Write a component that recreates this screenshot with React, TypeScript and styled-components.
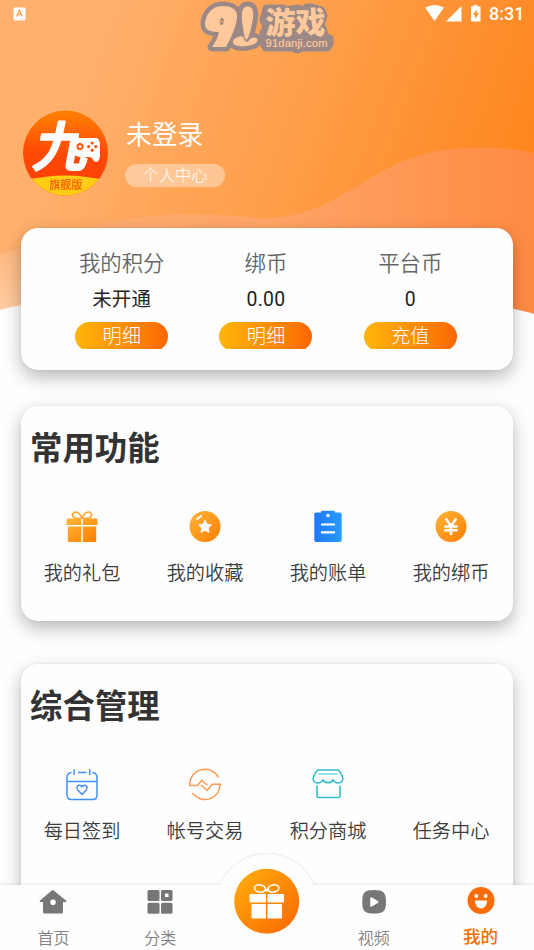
import React from "react";
import styled, { createGlobalStyle } from "styled-components";

const GlobalStyle = createGlobalStyle`
  * { box-sizing: border-box; }
  html, body { margin: 0; padding: 0; }
  body { background: #fefefe; font-family: "Noto Sans CJK SC", "Noto Sans", sans-serif; }
`;

const Screen = styled.div`
  position: relative;
  width: 534px;
  height: 950px;
  overflow: hidden;
  background: #fefefe;
  display: flex;
  flex-direction: column;
`;

const Backdrop = styled.svg`
  position: absolute;
  left: 0;
  top: 0;
`;

const StatusBar = styled.header`
  position: relative;
  flex: none;
  height: 28px;
  padding: 0 9px 0 13px;
  display: flex;
  align-items: center;
  justify-content: space-between;
`;

const StatusIcons = styled.div`
  display: flex;
  align-items: center;
`;

const Clock = styled.span`
  width: 36px;
  margin-left: 8px;
  font: 500 18px/28px Roboto, sans-serif;
  color: #fff;
  white-space: nowrap;
`;

const Watermark = styled.svg`
  position: absolute;
  left: 198px;
  top: 0;
`;

const Profile = styled.section`
  position: relative;
  flex: none;
  display: flex;
  gap: 17px;
  margin-top: 82px;
  padding-left: 23px;
  height: 118px;
`;

const Avatar = styled.svg`
  flex: none;
`;

const ProfileText = styled.div`
  display: flex;
  flex-direction: column;
  align-items: flex-start;
`;

const UserName = styled.div`
  margin: 5px 0 14px 1px;
  font-size: 25.8px;
  line-height: 35px;
  color: #fff;
`;

const CenterPill = styled.button`
  width: 100px;
  height: 23px;
  padding: 0 0 3px;
  border: 0;
  border-radius: 12px;
  background: rgba(255, 255, 255, 0.38);
  color: #fff;
  font: 300 16.3px/20px "Noto Sans CJK SC", sans-serif;
`;

const Card = styled.section<{ $height: number; $gap: number }>`
  position: relative;
  flex: none;
  width: 492px;
  height: ${(p) => p.$height}px;
  margin: 0 21px ${(p) => p.$gap}px;
  border-radius: 17px;
  background: #fefefe;
  box-shadow: 0 7px 18px rgba(0, 0, 0, 0.28), 0 0 2px rgba(0, 0, 0, 0.08);
`;

const Balances = styled.div`
  display: grid;
  grid-template-columns: repeat(3, 144.3px);
  justify-content: center;
  padding: 17px 2px 0 0;
`;

const Balance = styled.div`
  display: flex;
  flex-direction: column;
  align-items: center;
`;

const BalanceLabel = styled.div`
  font-size: 21.4px;
  line-height: 33px;
  font-weight: 350;
  color: #666;
`;

const BalanceValue = styled.div`
  margin: 5px 0 7px;
  font-family: Roboto, "Noto Sans CJK SC", sans-serif;
  font-size: 19.4px;
  line-height: 32px;
  letter-spacing: 0.3px;
  padding-top: 1px;
  height: 32px;
  color: #222;
`;

const ActionClip = styled.div`
  height: 27px;
  overflow: hidden;
`;

const Action = styled.button`
  display: block;
  width: 93px;
  height: 29px;
  padding: 0 0 2px;
  border: 0;
  border-radius: 15px;
  background: linear-gradient(90deg, #ffb60b, #ff9009 50%, #fa6800);
  color: #fff;
  font: 300 19.3px/27px "Noto Sans CJK SC", sans-serif;
`;

const Heading = styled.h2`
  margin: 0;
  padding: 16px 0 0 9px;
  font-size: 32.4px;
  line-height: 48px;
  font-weight: 700;
  color: #333;
`;

const Features = styled.div`
  display: grid;
  grid-template-columns: repeat(4, 1fr);
  margin: 40px 0.5px 0 -0.5px;
`;

const Feature = styled.div`
  display: flex;
  flex-direction: column;
  align-items: center;
  gap: 12px;
  font-size: 19.2px;
  line-height: 32px;
  font-weight: 350;
  color: #3c3c3c;
`;

const FeatureIcon = styled.svg`
  width: 34px;
  height: 34px;
  overflow: visible;
`;

const NavBar = styled.nav`
  position: absolute;
  left: 0;
  right: 0;
  bottom: 0;
  height: 65px;
  display: grid;
  grid-template-columns: repeat(5, 1fr);
  background: #fefefe;
  box-shadow: 0 -1px 3px rgba(0, 0, 0, 0.09);
`;

const NavItem = styled.div<{ $active?: boolean }>`
  display: flex;
  flex-direction: column;
  align-items: center;
  padding-top: 2px;
  font-size: ${(p) => (p.$active ? 17.6 : 16)}px;
  font-weight: ${(p) => (p.$active ? 500 : 350)};
  line-height: 24px;
  color: ${(p) => (p.$active ? "#fa6c05" : "#808080")};
`;

const NavIcon = styled.svg`
  flex: none;
  width: 30px;
  height: 30px;
  margin-bottom: 8px;
`;

const ActiveNavLabel = styled.span`
  margin-top: -1px;
`;

const GiftTab = styled.svg`
  position: absolute;
  left: 214px;
  top: -35px;
`;

function Background() {
  return (
    <Backdrop width="534" height="330" viewBox="0 0 534 330">
      <defs>
        <linearGradient id="sky" gradientUnits="userSpaceOnUse" x1="85" y1="50" x2="510" y2="205">
          <stop offset="0" stopColor="#ffb06d" />
          <stop offset="0.5" stopColor="#ff9e49" />
          <stop offset="1" stopColor="#ff861e" />
        </linearGradient>
        <linearGradient id="wave" gradientUnits="userSpaceOnUse" x1="90" y1="230" x2="534" y2="230">
          <stop offset="0" stopColor="#ffae72" />
          <stop offset="0.45" stopColor="#ffa365" />
          <stop offset="1" stopColor="#ff8b43" />
        </linearGradient>
        <linearGradient id="pale" x1="0" y1="0" x2="0" y2="1">
          <stop offset="0" stopColor="#ffb77d" />
          <stop offset="1" stopColor="#ffcda2" />
        </linearGradient>
      </defs>
      <path d="M0 0H534V290H0Z" fill="url(#sky)" />
      <path d="M85 229C145 210 205 213 264 218C350 218 370 149 470 148C500 147 520 149 534 153V314Q500 303 430 300L85 300Z" fill="url(#wave)" />
      <path d="M0 254Q30 244 60 244V300Q24 303 0 310Z" fill="url(#pale)" />
    </Backdrop>
  );
}

const NINE =
  "M24 6C14 6 7 15 7 24C7 30 12 32 21 32C20 36 18 42 14 47H28C33 38 39 25 39 16C39 9 33 6 24 6ZM24 18C27 18 26 25 23.500 25C21 25 21 18 24 18Z";
const PIN = "M50 6C44 5 42 14 44 24C45 31 46 40 48 40C51 40 53 31 55 21C57 12 55 6 50 6Z";
const DISC = "M45 36.500C41 36 35 38 35 42C35 46 42 47 49 46C57 45 61 41 59 39C57 36.500 53 37 50 41.500Q47 43 45 36.500Z";

function WatermarkLogo() {
  return (
    <Watermark width="146" height="58" viewBox="0 0 146 58">
      <g fill="#9c8985" stroke="#9c8985" strokeWidth="9" strokeLinejoin="round">
        <path d={NINE} />
        <path d={PIN} />
        <path d={DISC} />
        <path d="M69 9H85L88 11L100 9L104 11L109 8H114L123 11L125 16L122 24L125 31L126 37L131 39V44L129 47H104L99 49L95 47H68L66 43V33L69 27L66 20Z" />
      </g>
      <g fill="#ffc99b">
        <path d={NINE} fillRule="evenodd" />
        <path d={PIN} stroke="#9c8985" strokeWidth="1" />
        <path d={DISC} />
        <text x="67.500" y="32.500" fontFamily="Noto Sans CJK SC" fontSize="30" fontWeight="900">游戏</text>
        <text x="67.500" y="46.500" fontFamily="Liberation Sans" fontSize="11.200" textLength="62" stroke="#ffc99b" strokeWidth="0.200">91danji.com</text>
      </g>
    </Watermark>
  );
}

function AvatarLogo() {
  return (
    <Avatar width="85" height="86" viewBox="0 0 85 86">
      <defs>
        <linearGradient id="av" x1="0" y1="0" x2="0" y2="1">
          <stop offset="0" stopColor="#ff8200" />
          <stop offset="0.5" stopColor="#ff4a06" />
          <stop offset="1" stopColor="#ff3b08" />
        </linearGradient>
        <clipPath id="avc"><circle cx="42.5" cy="43" r="42.5" /></clipPath>
      </defs>
      <g clipPath="url(#avc)">
        <rect width="85" height="86" fill="url(#av)" />
        <path d="M0 71Q42 60 85 71V86H0Z" fill="#ffcd14" />
      </g>
      <text transform="translate(9 56) skewX(-11) scale(0.98 0.97)" fontFamily="Noto Sans CJK SC" fontWeight="500" fontSize="55" fill="#fff" stroke="#fff" strokeWidth="2.600" strokeLinejoin="round">九</text>
      <path d="M52 28H74Q77 30 77 35V46Q76 52 73 52C70 52 70 47 66 47H58Q51 47 51 42V32Q50 30 52 28Z" fill="#fff" />
      <circle cx="57" cy="36.5" r="2.5" fill="none" stroke="#ff5208" strokeWidth="2" />
      <g fill="#ff5208">
        <circle cx="69.2" cy="33" r="1.6" />
        <circle cx="69.2" cy="40.2" r="1.6" />
        <circle cx="65.6" cy="36.6" r="1.6" />
        <circle cx="72.800" cy="36.6" r="1.6" />
      </g>
      <text x="42.8" y="79" textAnchor="middle" fontFamily="Noto Sans CJK SC" fontSize="11" fontWeight="500" fill="#f45a08">旗舰版</text>
    </Avatar>
  );
}

function IconGradients() {
  return (
    <Backdrop width="0" height="0">
      <defs>
        <linearGradient id="or" x1="0" y1="0" x2="1" y2="1">
          <stop offset="0" stopColor="#ffb53c" />
          <stop offset="1" stopColor="#ff7e00" />
        </linearGradient>
        <linearGradient id="bl" x1="0" y1="0" x2="1" y2="0">
          <stop offset="0" stopColor="#1f78ff" />
          <stop offset="1" stopColor="#279cff" />
        </linearGradient>
      </defs>
    </Backdrop>
  );
}

const Gift = () => (
  <FeatureIcon viewBox="0 0 34 34">
    <g fill="none" stroke="#ffa42c" strokeWidth="1.5">
      <path d="M17 8C14 1 9 1 7.5 4C6.500 8 12 9 17 8Z" />
      <path d="M17 8C20 1 25 1 26.500 4C27.500 8 22 9 17 8Z" />
    </g>
    <path d="M3 8.500H16.200V15H1.500V10Q1.500 8.500 3 8.500ZM17.800 8.500H31Q32.500 8.500 32.500 10V15H17.800ZM2.800 16.500H16.200V32H4Q2.800 32 2.800 31ZM17.800 16.500H31.200V31Q31.200 32 30 32H17.800Z" fill="url(#or)" />
  </FeatureIcon>
);

const Favorite = () => (
  <FeatureIcon viewBox="0 0 34 34">
    <circle cx="17" cy="16.500" r="15.500" fill="url(#or)" />
    <path d="M17 10.300L19 14.300L23.300 15L20.200 18L21 22.300L17 20.300L13 22.300L13.800 18L10.700 15L15 14.300Z" fill="#fff" stroke="#fff" strokeWidth="1" strokeLinejoin="round" />
    <path d="M9 9.300L13 6" stroke="#fff" strokeWidth="2" strokeLinecap="round" />
  </FeatureIcon>
);

const Bill = () => (
  <FeatureIcon viewBox="0 0 34 34">
    <path d="M5 2.500H10V2Q10 0.800 11.500 0.800H22.500Q24 0.800 24 2V2.500H29Q30.700 2.500 30.700 4.500V30Q30.700 32 29 32H5Q3.300 32 3.300 30V4.500Q3.300 2.500 5 2.500Z" fill="url(#bl)" />
    <circle cx="17" cy="5.500" r="1.800" fill="#fff" />
    <path d="M10 14.500H24M10 22.300H24" stroke="#fff" strokeWidth="2.200" />
  </FeatureIcon>
);

const Coin = () => (
  <FeatureIcon viewBox="0 0 34 34">
    <circle cx="17" cy="16.500" r="15.500" fill="url(#or)" />
    <path d="M12.300 9.300L17 16L21.700 9.300M17 16V24M11.300 16.500H22.700M11.300 20.200H22.700" fill="none" stroke="#fff" strokeWidth="2.500" strokeLinecap="round" strokeLinejoin="round" />
  </FeatureIcon>
);

const Calendar = () => (
  <FeatureIcon viewBox="0 0 34 34" fill="none" stroke="#438ff8" strokeWidth="1.500">
    <path d="M6.500 4.500Q2 5 2 9.500V27Q2 31.500 6.500 31.500H27.500Q32 31.500 32 27V9.500Q32 5 27.500 4.500M13 4.500H21.500M9 1.300V7M24.700 1.300V7M2 13.500H32" />
    <path d="M17 26.500L13 22.300C10.500 19.500 12.500 16.900 14.700 17.200Q16 17.400 17 18.800Q18 17.400 19.300 17.200C21.500 16.900 23.500 19.500 21 22.300Z" />
  </FeatureIcon>
);

const Trade = () => (
  <FeatureIcon viewBox="0 0 34 34" fill="none" stroke="#ff9a53" strokeWidth="1.500">
    <path d="M30.600 9.700A15.200 15.200 0 0 0 1.800 17.400H9.500L13.700 12.300L19.500 17.300" />
    <path d="M4.500 25A15.200 15.200 0 0 0 32.200 16.300H24.300L19.200 22.400L13 17" />
  </FeatureIcon>
);

const Shop = () => (
  <FeatureIcon viewBox="0 0 34 34" fill="none" stroke="#35bdca" strokeWidth="1.600">
    <path d="M7 2H27L29 4L31.700 9.500C32.500 13 30 15 27.500 15Q23.500 15 22 12Q20.500 14.700 17 14.700Q13.500 14.700 12 12Q10.500 15 6.500 15C4 15 1.500 13 2.300 9.500L5 4Z" />
    <path d="M7.500 6H26.500" stroke="#8ae2e4" strokeWidth="1.800" />
    <path d="M6 17.500V28Q6 29.500 7.500 29.500H27.500Q29 29.500 29 28V17.500" />
  </FeatureIcon>
);

const Blank = () => <FeatureIcon viewBox="0 0 34 34" />;

const balances = [
  { label: "我的积分", value: "未开通", action: "明细" },
  { label: "绑币", value: "0.00", action: "明细" },
  { label: "平台币", value: "0", action: "充值" },
];

const common = [
  { Icon: Gift, label: "我的礼包" },
  { Icon: Favorite, label: "我的收藏" },
  { Icon: Bill, label: "我的账单" },
  { Icon: Coin, label: "我的绑币" },
];

const management = [
  { Icon: Calendar, label: "每日签到" },
  { Icon: Trade, label: "帐号交易" },
  { Icon: Shop, label: "积分商城" },
  { Icon: Blank, label: "任务中心" },
];

function FeatureCard({ title, items, height, gap }: { title: string; items: typeof common; height: number; gap: number }) {
  return (
    <Card $height={height} $gap={gap}>
      <Heading>{title}</Heading>
      <Features>
        {items.map(({ Icon, label }) => (
          <Feature key={label}>
            <Icon />
            <span>{label}</span>
          </Feature>
        ))}
      </Features>
    </Card>
  );
}

export default function App() {
  return (
    <Screen>
      <GlobalStyle />
      <Background />
      <IconGradients />
      <StatusBar>
        <svg width="13" height="14" viewBox="0 0 13 14">
          <rect x="0.500" y="0.500" width="12" height="13" rx="1" fill="#fff" />
          <path d="M3.500 9.500L6.500 3.500L9.300 9.500M4.700 7.500H8.300" stroke="#ffa95f" strokeWidth="1.500" fill="none" />
          <path d="M7 12H11.500" stroke="#ffb06d" strokeWidth="0.700" strokeDasharray="1 0.700" />
        </svg>
        <StatusIcons>
          <svg width="56" height="18" viewBox="0 0 56 18" fill="#fff">
            <path d="M0 2.500Q9.500 -2.500 19 2.500L9.500 16Z" />
            <path d="M36.500 1V16.500H21Z" />
            <path fillRule="evenodd" d="M48.500 0H52.500V1.500H55.500V16.500H46V1.500H48.500ZM51.800 4L48 10H50V14L54 8H51.700Z" />
          </svg>
          <Clock>8:31</Clock>
        </StatusIcons>
      </StatusBar>
      <WatermarkLogo />
      <Profile>
        <AvatarLogo />
        <ProfileText>
          <UserName>未登录</UserName>
          <CenterPill>个人中心</CenterPill>
        </ProfileText>
      </Profile>
      <Card $height={142} $gap={36}>
        <Balances>
          {balances.map((b) => (
            <Balance key={b.label}>
              <BalanceLabel>{b.label}</BalanceLabel>
              <BalanceValue>{b.value}</BalanceValue>
              <ActionClip>
                <Action>{b.action}</Action>
              </ActionClip>
            </Balance>
          ))}
        </Balances>
      </Card>
      <FeatureCard title="常用功能" items={common} height={215} gap={43} />
      <FeatureCard title="综合管理" items={management} height={330} gap={0} />
      <NavBar>
        <GiftTab width="106" height="100" viewBox="0 0 106 100">
          <defs>
            <linearGradient id="tab" x1="0" y1="0" x2="1" y2="1">
              <stop offset="0.100" stopColor="#ffa90c" />
              <stop offset="1" stopColor="#fa6500" />
            </linearGradient>
          </defs>
          <path d="M5.500 35A51.500 51.500 0 0 1 100.500 35" fill="#fefefe" stroke="#000" strokeOpacity="0.045" strokeWidth="2" />
          <circle cx="53" cy="54.500" r="49.500" fill="#fefefe" />
          <circle cx="52.700" cy="51.300" r="32.500" fill="url(#tab)" />
          <g fill="none" stroke="#fff" strokeWidth="1.600">
            <ellipse cx="46" cy="38.500" rx="5.500" ry="3.600" transform="rotate(10 46 38.500)" />
            <ellipse cx="59.500" cy="38.500" rx="5.500" ry="3.600" transform="rotate(-10 59.500 38.500)" />
          </g>
          <g fill="#fff">
            <rect x="35.500" y="44" width="16.500" height="8.500" rx="1.200" />
            <rect x="53.500" y="44" width="16.500" height="8.500" rx="1.200" />
            <rect x="37.500" y="54" width="14.500" height="14.500" rx="1" />
            <rect x="53.500" y="54" width="14.500" height="14.500" rx="1" />
            <circle cx="52.700" cy="40" r="1.600" />
          </g>
        </GiftTab>
        <NavItem>
          <NavIcon viewBox="0 0 30 30">
            <path fill="#777" fillRule="evenodd" d="M15 3L28 13.500Q29 15 27 15H25V25Q25 26.500 23.500 26.500H6.500Q5 26.500 5 25V15H3Q1 15 2 13.500L13.500 3.700Q15 2.300 16.500 3.700ZM15 12.500A2.800 2.800 0 1 0 15 18.100A2.800 2.800 0 1 0 15 12.500Z" />
          </NavIcon>
          首页
        </NavItem>
        <NavItem>
          <NavIcon viewBox="0 0 30 30" fill="#777">
            <rect x="2.500" y="3" width="12" height="11" rx="1.500" />
            <path fillRule="evenodd" d="M17 3H26Q27.500 3 27.500 4.500V12.500Q27.500 14 26 14H17.500Q16 14 16 12.500V4.500Q16 3 17 3ZM20 6.500V10H23.500V6.500Z" />
            <rect x="2.500" y="15.700" width="12" height="11" rx="1.500" />
            <rect x="16" y="15.700" width="11.500" height="11" rx="1.500" />
          </NavIcon>
          分类
        </NavItem>
        <NavItem />
        <NavItem>
          <NavIcon viewBox="0 0 30 30">
            <path d="M15 3C24.500 3 27 5.500 27 15S24.500 26.500 15 26.500S3.300 24.500 3.300 15S5.500 3 15 3Z" fill="#777" />
            <path d="M12 11L18.800 15L12 19Z" fill="#fff" stroke="#fff" strokeWidth="1.500" strokeLinejoin="round" />
          </NavIcon>
          视频
        </NavItem>
        <NavItem $active>
          <NavIcon viewBox="0 0 30 30">
            <circle cx="15" cy="13.500" r="13.500" fill="#fa6c05" />
            <circle cx="10.300" cy="9" r="1.900" fill="#fff" />
            <circle cx="19.700" cy="9" r="1.900" fill="#fff" />
            <path d="M9 13.500H21C21 24 9 24 9 13.500Z" fill="#fff" />
          </NavIcon>
          <ActiveNavLabel>我的</ActiveNavLabel>
        </NavItem>
      </NavBar>
    </Screen>
  );
}
